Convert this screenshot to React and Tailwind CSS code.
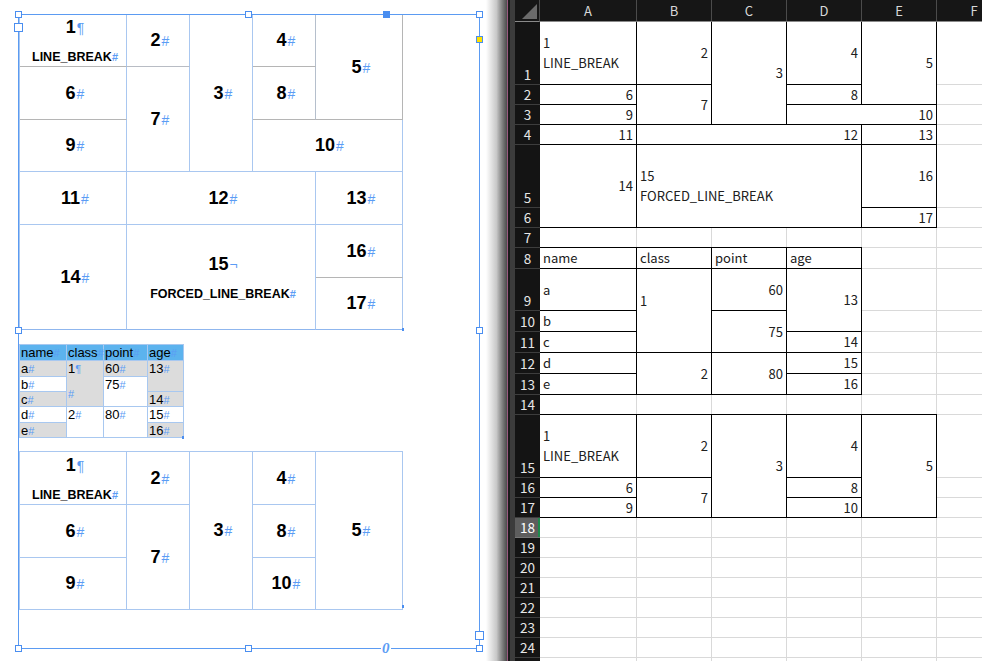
import React from "react";

function Mark({ c = "#" }) {
  return <span className="ml-[1px] text-[14px] font-normal text-[#5b9cf5]">{c}</span>;
}

function SMark({ c = "#" }) {
  return <span className="text-[11px] text-[#5b9cf5]">{c}</span>;
}

function Big({ n, mark = "#" }) {
  return (
    <span className="whitespace-nowrap text-[18px] font-bold leading-[22px] text-black">
      {n}
      <Mark c={mark} />
    </span>
  );
}

function DCell({ className, children }) {
  return (
    <div className={`flex flex-col items-center justify-center border-r border-b pl-[4px] ${className}`}>
      {children}
    </div>
  );
}

function SCell({ className, children }) {
  return (
    <div className={`border-r border-b border-[#a8c8f0] pl-[1px] text-[13px] leading-[15px] text-black ${className}`}>
      {children}
    </div>
  );
}

function Handle({ className }) {
  return <div className={`absolute border border-[#4a8ef0] ${className}`} />;
}

function LineBreakCell({ className }) {
  return (
    <DCell className={className}>
      <span className="text-[18px] font-bold leading-[22px] text-black">
        1<Mark c="¶" />
      </span>
      <span className="mt-[10px] whitespace-nowrap text-[12.5px] font-bold leading-[16px] text-black">
        LINE_BREAK<SMark />
      </span>
    </DCell>
  );
}

const xRows = [63, 20, 20, 20, 63, 20, 20, 21, 42, 21, 21, 21, 21, 20, 63, 20, 20, 20, 20, 20, 20, 20, 20, 20, 20];
const xCols = ["A", "B", "C", "D", "E", "F"];

const xCells = [
  // table 1
  { p: "col-start-2 row-start-2", t: ["1", "LINE_BREAK"], l: true },
  { p: "col-start-3 row-start-2", t: ["2"] },
  { p: "col-start-4 row-start-2 row-span-3", t: ["3"] },
  { p: "col-start-5 row-start-2", t: ["4"] },
  { p: "col-start-6 row-start-2 row-span-2", t: ["5"] },
  { p: "col-start-2 row-start-3", t: ["6"] },
  { p: "col-start-3 row-start-3 row-span-2", t: ["7"] },
  { p: "col-start-5 row-start-3", t: ["8"] },
  { p: "col-start-2 row-start-4", t: ["9"] },
  { p: "col-start-5 row-start-4 col-span-2", t: ["10"] },
  { p: "col-start-2 row-start-5", t: ["11"] },
  { p: "col-start-3 row-start-5 col-span-3", t: ["12"] },
  { p: "col-start-6 row-start-5", t: ["13"] },
  { p: "col-start-2 row-start-6 row-span-2", t: ["14"] },
  { p: "col-start-3 row-start-6 col-span-3 row-span-2", t: ["15", "FORCED_LINE_BREAK"], l: true },
  { p: "col-start-6 row-start-6", t: ["16"] },
  { p: "col-start-6 row-start-7", t: ["17"] },
  // table 2
  { p: "col-start-2 row-start-9 -mt-px border-t", t: ["name"], l: true },
  { p: "col-start-3 row-start-9 -mt-px border-t", t: ["class"], l: true },
  { p: "col-start-4 row-start-9 -mt-px border-t", t: ["point"], l: true },
  { p: "col-start-5 row-start-9 -mt-px border-t", t: ["age"], l: true },
  { p: "col-start-2 row-start-10", t: ["a"], l: true },
  { p: "col-start-2 row-start-11", t: ["b"], l: true },
  { p: "col-start-2 row-start-12", t: ["c"], l: true },
  { p: "col-start-2 row-start-13", t: ["d"], l: true },
  { p: "col-start-2 row-start-14", t: ["e"], l: true },
  { p: "col-start-3 row-start-10 row-span-3", t: ["1", "\u00a0"], l: true },
  { p: "col-start-3 row-start-13 row-span-2", t: ["2"] },
  { p: "col-start-4 row-start-10", t: ["60"] },
  { p: "col-start-4 row-start-11 row-span-2", t: ["75"] },
  { p: "col-start-4 row-start-13 row-span-2", t: ["80"] },
  { p: "col-start-5 row-start-10 row-span-2", t: ["13"] },
  { p: "col-start-5 row-start-12", t: ["14"] },
  { p: "col-start-5 row-start-13", t: ["15"] },
  { p: "col-start-5 row-start-14", t: ["16"] },
  // table 3
  { p: "col-start-2 row-start-16 -mt-px border-t", t: ["1", "LINE_BREAK"], l: true },
  { p: "col-start-3 row-start-16 -mt-px border-t", t: ["2"] },
  { p: "col-start-4 row-start-16 row-span-3 -mt-px border-t", t: ["3"] },
  { p: "col-start-5 row-start-16 -mt-px border-t", t: ["4"] },
  { p: "col-start-6 row-start-16 row-span-3 -mt-px border-t", t: ["5"] },
  { p: "col-start-2 row-start-17", t: ["6"] },
  { p: "col-start-3 row-start-17 row-span-2", t: ["7"] },
  { p: "col-start-5 row-start-17", t: ["8"] },
  { p: "col-start-2 row-start-18", t: ["9"] },
  { p: "col-start-5 row-start-18", t: ["10"] },
];

function Sheet() {
  return (
    <div className="grid shrink-0 grid-cols-[25px_97px_75px_75px_75px_75px_75px] grid-rows-[22px_63px_20px_20px_20px_63px_20px_20px_21px_42px_21px_21px_21px_21px_20px_63px_20px_20px_20px_20px_20px_20px_20px_20px_20px_20px] font-['Noto_Sans_CJK_JP',sans-serif]">
      {/* corner */}
      <div className="col-start-1 row-start-1 border-r border-b border-r-[#4b4b4b] border-b-[#8a8a8a] bg-[#161616]">
        <svg width="24" height="21" viewBox="0 0 24 21">
          <polygon points="22,4 22,19 7,19" fill="#6b6b6b" />
        </svg>
      </div>
      {xCols.map((c, i) => (
        <div
          key={c}
          style={{ gridRow: 1, gridColumn: i + 2 }}
          className="flex items-center justify-center border-r border-b border-r-[#4b4b4b] border-b-[#8a8a8a] bg-[#161616] text-[13px] text-[#d8d8d8]"
        >
          {c}
        </div>
      ))}
      {xRows.map((h, r) => (
        <div
          key={"h" + r}
          style={{ gridRow: r + 2, gridColumn: 1 }}
          className={`flex items-end justify-center border-b text-[13.5px] leading-[19px] ${
            r === 17
              ? "border-[#777] bg-[#5e5e5e] text-white shadow-[inset_-2px_0_0_#1f8a4c]"
              : "border-[#3d3d3d] bg-[#141414] text-[#e6e6e6]"
          }`}
        >
          {r < 24 ? r + 1 : ""}
        </div>
      ))}
      {xRows.map((h, r) =>
        xCols.map((c, i) => (
          <div
            key={c + r}
            style={{ gridRow: r + 2, gridColumn: i + 2 }}
            className="border-r border-b border-[#d9d9d9] bg-white"
          />
        ))
      )}
      {xCells.map((c, i) => (
        <div
          key={"x" + i}
          className={`flex flex-col justify-center whitespace-nowrap border-r border-b border-black bg-white px-[3px] text-[13px] leading-[20px] text-[#202020] ${
            c.l ? "items-start" : "items-end"
          } ${c.p}`}
        >
          {c.t.map((s, j) => (
            <span key={j}>{s}</span>
          ))}
        </div>
      ))}
    </div>
  );
}

export default function App() {
  return (
    <div className="flex h-[661px] w-[982px] overflow-hidden bg-white font-['Liberation_Sans',Arial,sans-serif]">
      {/* layout page */}
      <div className="relative w-[486px] shrink-0 bg-white">
        <div className="ml-[18px] mt-[14px] h-[635px] w-[462px] border border-[#5b9bf2]">
          {/* table 1 */}
          <div className="-mt-px grid w-[384px] grid-cols-[107px_63px_63px_63px_87px] grid-rows-[52px_53px_52px_53px_53px_52px] border-l border-t border-l-[#a9c7f0] border-t-[#5b9bf2]">
            <LineBreakCell className="col-start-1 row-start-1 border-r-[#a9c7f0] border-b-[#b5b5b5]" />
            <DCell className="col-start-2 row-start-1 border-r-[#a9c7f0] border-b-[#b8bcc4]"><Big n="2" /></DCell>
            <DCell className="col-start-3 row-start-1 row-span-3 border-r-[#a9c7f0] border-b-[#a9c7f0]"><Big n="3" /></DCell>
            <DCell className="col-start-4 row-start-1 border-r-[#b5bfcc] border-b-[#b5b5b5]"><Big n="4" /></DCell>
            <DCell className="col-start-5 row-start-1 row-span-2 border-r-[#b5b5b5] border-b-[#b5b5b5]"><Big n="5" /></DCell>
            <DCell className="col-start-1 row-start-2 border-r-[#a9c7f0] border-b-[#b5b5b5]"><Big n="6" /></DCell>
            <DCell className="col-start-2 row-start-2 row-span-2 border-r-[#a9c7f0] border-b-[#a9c7f0]"><Big n="7" /></DCell>
            <DCell className="col-start-4 row-start-2 border-r-[#b5bfcc] border-b-[#b5b5b5]"><Big n="8" /></DCell>
            <DCell className="col-start-1 row-start-3 border-r-[#a9c7f0] border-b-[#a9c7f0]"><Big n="9" /></DCell>
            <DCell className="col-start-4 row-start-3 col-span-2 border-r-[#a9c7f0] border-b-[#a9c7f0]"><Big n="10" /></DCell>
            <DCell className="col-start-1 row-start-4 border-r-[#a9c7f0] border-b-[#a9c7f0]"><Big n="11" /></DCell>
            <DCell className="col-start-2 row-start-4 col-span-3 border-r-[#a9c7f0] border-b-[#a9c7f0]"><Big n="12" /></DCell>
            <DCell className="col-start-5 row-start-4 border-r-[#a9c7f0] border-b-[#a9c7f0]"><Big n="13" /></DCell>
            <DCell className="col-start-1 row-start-5 row-span-2 border-r-[#a9c7f0] border-b-[#8fb6ee]"><Big n="14" /></DCell>
            <DCell className="col-start-2 row-start-5 col-span-3 row-span-2 border-r-[#a9c7f0] border-b-[#8fb6ee]">
              <span className="text-[18px] font-bold leading-[22px] text-black">
                15<Mark c="¬" />
              </span>
              <span className="mt-[10px] whitespace-nowrap text-[12.5px] font-bold leading-[16px] text-black">
                FORCED_LINE_BREAK<SMark />
              </span>
            </DCell>
            <DCell className="col-start-5 row-start-5 border-r-[#a9c7f0] border-b-[#b5b5b5]"><Big n="16" /></DCell>
            <DCell className="col-start-5 row-start-6 border-r-[#a9c7f0] border-b-[#8fb6ee]"><Big n="17" /></DCell>
          </div>

          {/* table 2 */}
          <div className="mt-[14px] grid w-[165px] grid-cols-[47px_37px_44px_36px] grid-rows-[16px_16px_15px_15px_16px_15px] border-l border-t border-[#a8c8f0]">
            <SCell className="col-start-1 row-start-1 bg-[#5cb3ee]">name<SMark /></SCell>
            <SCell className="col-start-2 row-start-1 bg-[#5cb3ee]">class<SMark /></SCell>
            <SCell className="col-start-3 row-start-1 bg-[#5cb3ee]">point<SMark /></SCell>
            <SCell className="col-start-4 row-start-1 bg-[#5cb3ee]">age<SMark /></SCell>
            <SCell className="col-start-1 row-start-2 bg-[#dcdcdc]">a<SMark /></SCell>
            <SCell className="col-start-1 row-start-3 bg-white">b<SMark /></SCell>
            <SCell className="col-start-1 row-start-4 bg-[#dcdcdc]">c<SMark /></SCell>
            <SCell className="col-start-1 row-start-5 bg-white">d<SMark /></SCell>
            <SCell className="col-start-1 row-start-6 bg-[#dcdcdc]">e<SMark /></SCell>
            <SCell className="col-start-2 row-start-2 row-span-3 bg-[#dcdcdc]">
              <div>1<SMark c="¶" /></div>
              <div className="mt-[9px]"><SMark /></div>
            </SCell>
            <SCell className="col-start-2 row-start-5 row-span-2 bg-white">2<SMark /></SCell>
            <SCell className="col-start-3 row-start-2 bg-[#dcdcdc]">60<SMark /></SCell>
            <SCell className="col-start-3 row-start-3 row-span-2 bg-white">75<SMark /></SCell>
            <SCell className="col-start-3 row-start-5 row-span-2 bg-white">80<SMark /></SCell>
            <SCell className="col-start-4 row-start-2 row-span-2 bg-[#dcdcdc]">13<SMark /></SCell>
            <SCell className="col-start-4 row-start-4 bg-[#dcdcdc]">14<SMark /></SCell>
            <SCell className="col-start-4 row-start-5 bg-white">15<SMark /></SCell>
            <SCell className="col-start-4 row-start-6 bg-[#dcdcdc]">16<SMark /></SCell>
          </div>

          {/* table 3 */}
          <div className="mt-[13px] grid w-[384px] grid-cols-[107px_63px_63px_63px_87px] grid-rows-[53px_53px_52px] border-l border-t border-[#a9c7f0]">
            <LineBreakCell className="col-start-1 row-start-1 border-[#a9c7f0]" />
            <DCell className="col-start-2 row-start-1 border-[#a9c7f0]"><Big n="2" /></DCell>
            <DCell className="col-start-3 row-start-1 row-span-3 border-[#a9c7f0]"><Big n="3" /></DCell>
            <DCell className="col-start-4 row-start-1 border-[#a9c7f0]"><Big n="4" /></DCell>
            <DCell className="col-start-5 row-start-1 row-span-3 border-[#a9c7f0]"><Big n="5" /></DCell>
            <DCell className="col-start-1 row-start-2 border-[#a9c7f0]"><Big n="6" /></DCell>
            <DCell className="col-start-2 row-start-2 row-span-2 border-[#a9c7f0]"><Big n="7" /></DCell>
            <DCell className="col-start-4 row-start-2 border-[#a9c7f0]"><Big n="8" /></DCell>
            <DCell className="col-start-1 row-start-3 border-[#a9c7f0]"><Big n="9" /></DCell>
            <DCell className="col-start-4 row-start-3 border-[#a9c7f0]"><Big n="10" /></DCell>
          </div>
        </div>

        {/* frame handles */}
        <Handle className="left-[15px] top-[11px] h-[7px] w-[7px] bg-white" />
        <Handle className="left-[14px] top-[23px] h-[9px] w-[9px] bg-white" />
        <Handle className="left-[245px] top-[11px] h-[7px] w-[7px] bg-white" />
        <Handle className="left-[383px] top-[11px] h-[7px] w-[7px] bg-[#4a8ef0]" />
        <Handle className="left-[476px] top-[11px] h-[7px] w-[7px] bg-white" />
        <Handle className="left-[476px] top-[36px] h-[7px] w-[7px] bg-[#ffe100]" />
        <Handle className="left-[15px] top-[327px] h-[7px] w-[7px] bg-white" />
        <Handle className="left-[476px] top-[327px] h-[7px] w-[7px] bg-white" />
        <Handle className="left-[15px] top-[645px] h-[7px] w-[7px] bg-white" />
        <Handle className="left-[245px] top-[645px] h-[7px] w-[7px] bg-white" />
        <Handle className="left-[476px] top-[645px] h-[7px] w-[7px] bg-white" />
        <Handle className="left-[475px] top-[631px] h-[9px] w-[9px] bg-white" />
        <div className="absolute left-[402px] top-[328px] h-[3px] w-[2px] bg-[#4a8ef0]" />
        <div className="absolute left-[402px] top-[605px] h-[3px] w-[2px] bg-[#4a8ef0]" />
        <div className="absolute left-[182px] top-[436px] h-[3px] w-[2px] bg-[#4a8ef0]" />
        <span className="absolute left-[381px] top-[640px] bg-white px-[1px] font-['Liberation_Serif',serif] text-[15px] font-bold italic leading-[16px] text-[#5b9cf5]">
          0
        </span>
      </div>

      {/* page shadow and window edge */}
      <div className="w-[21px] shrink-0 bg-gradient-to-r from-white via-[#c8c8c8] to-[#4a4a4a]" />
      <div className="w-px shrink-0 bg-[#9a5a80]" />
      <div className="w-[2px] shrink-0 bg-[#1a1a1a]" />
      <div className="w-[5px] shrink-0 bg-[#3c3c3c]" />

      <Sheet />
    </div>
  );
}
